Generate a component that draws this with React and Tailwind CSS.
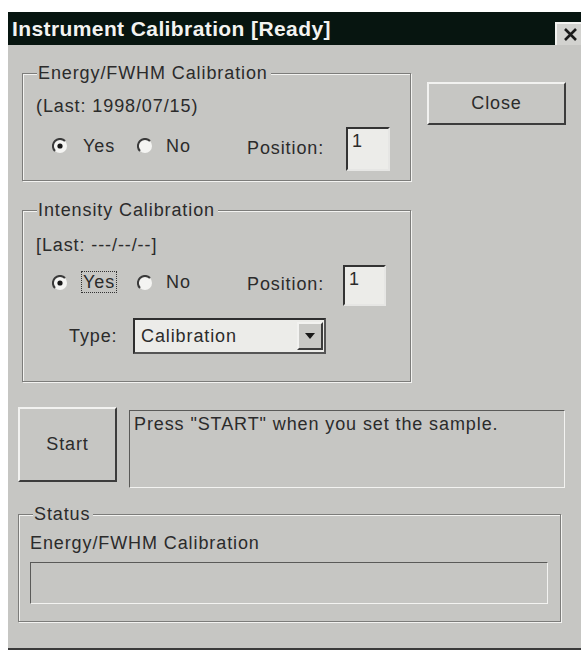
import { useState } from "react";

const FACE = "bg-[#c6c6c3]";

// win95-style etched frame with a caption sitting on the top edge
const GroupBox = ({ title, className = "", children }) => (
  <div
    className={`relative border border-[#7c7c7a] shadow-[1px_1px_0_#f3f3f1,inset_1px_1px_0_#f3f3f1] ${className}`}
  >
    <span className={`absolute -top-[11px] left-[14px] ${FACE} pl-[1px] pr-[3px] leading-[20px]`}>
      {title}
    </span>
    {children}
  </div>
);

const RaisedButton = ({ className = "", children }) => (
  <button
    type="button"
    className={`flex items-center justify-center border-2 border-t-[#f2f2f0] border-l-[#f2f2f0] border-b-[#3c3c3c] border-r-[#3c3c3c] ${FACE} ${className}`}
  >
    {children}
  </button>
);

const Radio = ({ checked }) => (
  <svg width="16" height="16" viewBox="0 0 16 16" className="shrink-0">
    <circle cx="8" cy="8" r="7" fill="#f4f4f2" />
    <path d="M3 13 A7 7 0 0 1 13 3" stroke="#3a3a3a" strokeWidth="2" fill="none" />
    {checked && <circle cx="8" cy="8" r="2.6" fill="#161616" />}
  </svg>
);

const NumberBox = ({ value, className = "" }) => (
  <div
    className={`border-2 border-t-[#333] border-l-[#333] border-b-[#e6e6e4] border-r-[#e6e6e4] bg-[#ecece9] pl-[4px] pt-[2px] leading-[20px] ${className}`}
  >
    {value}
  </div>
);

const YesNoRow = ({ focused, position, className = "" }) => (
  <div className={`flex items-center ${className}`}>
    <div className="w-[29px]" />
    <div className="mb-[6px] flex items-center">
      <Radio checked />
      <div className="w-[69px] pl-[13px]">
        <span className={focused ? "border border-dotted border-[#333] px-[1px]" : "px-[2px]"}>Yes</span>
      </div>
      <Radio checked={false} />
      <div className="w-[94px] pl-[13px]">No</div>
    </div>
    <div className="mb-[2px] w-[99px]">{position}</div>
  </div>
);

export default function App() {
  const [type] = useState("Calibration");

  return (
    <div className="h-[652px] w-[581px] overflow-hidden bg-white pl-[8px] pt-[12px] font-['Liberation_Sans',Arial,sans-serif] text-[18px] tracking-[0.9px] text-[#2b2b2b]">
      <div className={`flex h-[638px] w-[573px] flex-col border-b-2 border-[#3a3a3a] ${FACE}`}>
        {/* caption bar */}
        <div className="flex h-[33px] shrink-0 items-start justify-between bg-[#071510]">
          <span className="pl-[4px] pt-[4px] text-[21px] font-bold leading-[26px] tracking-[0.4px] text-[#f3f3f1]">
            Instrument Calibration [Ready]
          </span>
          <div className="mt-[10px] flex h-[23px] w-[26px] items-center justify-center border-t-2 border-l-2 border-[#f2f2f0] bg-[#d2d2cf] pl-[2px]">
            <svg width="15" height="13" viewBox="0 0 15 13">
              <path d="M2 1 L13 12 M13 1 L2 12" stroke="#1a1a1a" strokeWidth="2.6" />
            </svg>
          </div>
        </div>

        <div className="flex pl-[14px] pt-[28px]">
          <div className="flex w-[389px] flex-col">
            <GroupBox title="Energy/FWHM Calibration" className="h-[108px]">
              <div className="pl-[13px] pt-[22px] leading-[20px]">(Last: 1998/07/15)</div>
              <div className="mt-[11px] flex items-center">
                <YesNoRow position="Position:" />
                <NumberBox value="1" className="h-[44px] w-[44px]" />
              </div>
            </GroupBox>

            <GroupBox title="Intensity Calibration" className="mt-[29px] h-[172px]">
              <div className="pl-[13px] pt-[24px] leading-[20px]">[Last: ---/--/--]</div>
              <div className="mt-[10px] flex items-center">
                <YesNoRow focused position="Position:" />
                <NumberBox value="1" className="-ml-[3px] h-[41px] w-[43px]" />
              </div>
              <div className="mt-[12px] flex items-center">
                <div className="w-[110px] pl-[46px]">Type:</div>
                <div className="flex h-[36px] w-[193px] items-center justify-between border-2 border-[#2e2e2e] border-b-[#555] border-r-[#555] bg-[#ecece9] pl-[6px]">
                  <span>{type}</span>
                  <div className="mr-[1px] flex h-[28px] w-[26px] items-center justify-center border-2 border-t-[#f2f2f0] border-l-[#f2f2f0] border-b-[#3c3c3c] border-r-[#3c3c3c] bg-[#c9c9c6]">
                    <svg width="10" height="6" viewBox="0 0 10 6">
                      <path d="M0 0 H10 L5 6 Z" fill="#1a1a1a" />
                    </svg>
                  </div>
                </div>
              </div>
            </GroupBox>
          </div>

          <RaisedButton className="ml-[16px] mt-[9px] h-[43px] w-[139px]">Close</RaisedButton>
        </div>

        <div className="mt-[25px] flex pl-[10px]">
          <RaisedButton className="h-[75px] w-[99px]">Start</RaisedButton>
          <div className="ml-[12px] mt-[3px] h-[78px] w-[436px] border border-t-[#5a5a58] border-l-[#5a5a58] border-b-[#f3f3f1] border-r-[#f3f3f1] pl-[4px] pt-[3px] leading-[20px]">
            Press "START" when you set the sample.
          </div>
        </div>

        <GroupBox title="Status" className="ml-[10px] mt-[26px] h-[108px] w-[543px]">
          <div className="pl-[11px] pt-[18px] leading-[20px]">Energy/FWHM Calibration</div>
          <div className="ml-[11px] mt-[9px] h-[42px] w-[518px] border border-t-[#5a5a58] border-l-[#5a5a58] border-b-[#f3f3f1] border-r-[#f3f3f1]" />
        </GroupBox>
      </div>
    </div>
  );
}
